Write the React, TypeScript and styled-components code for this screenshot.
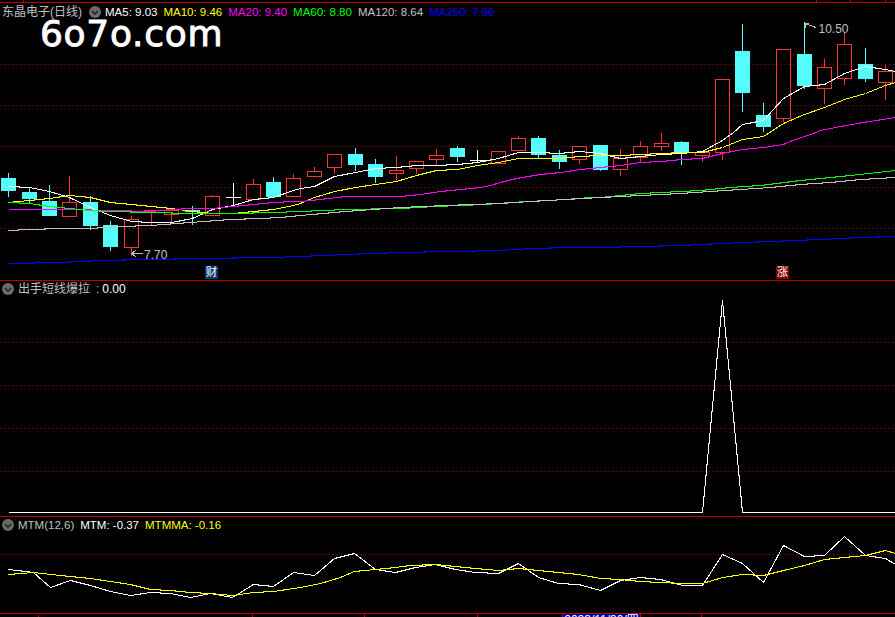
import React from "react";
import styled, { createGlobalStyle } from "styled-components";

const GlobalStyle = createGlobalStyle`
  html, body { margin: 0; padding: 0; background: #000; overflow: hidden; }
  #root { width: 895px; height: 617px; }
`;

const RED = "#c00000";
const UI_FONT = `"Liberation Sans", "Noto Sans CJK SC", sans-serif`;

const Page = styled.div`
  width: 895px;
  height: 617px;
  background: #000;
  display: flex;
  flex-direction: column;
  overflow: hidden;
  font-family: ${UI_FONT};
`;

const TopStrip = styled.div`
  position: relative;
  flex: none;
  height: 2px;
`;

const AxisStrip = styled.div`
  position: relative;
  flex: none;
  height: 4px;
  box-sizing: border-box;
  border-top: 1px solid ${RED};
  overflow: hidden;
`;

const Tick = styled.i<{ $x: number; $short?: boolean }>`
  position: absolute;
  left: ${(p) => p.$x}px;
  bottom: 0;
  top: ${(p) => (p.$short ? "1px" : "0")};
  width: 1px;
  background: ${RED};
`;

const DateBox = styled.div`
  position: absolute;
  left: 562px;
  top: 0;
  width: 79px;
  height: 3px;
  border-left: 1px solid ${RED};
  border-right: 1px solid ${RED};
  background: #0000a0;
  color: #fff;
  font-size: 12px;
  line-height: 12px;
  text-align: center;
  white-space: nowrap;
  overflow: hidden;
  box-sizing: border-box;
`;

const Panel = styled.section<{ $h: number }>`
  position: relative;
  flex: none;
  height: ${(p) => p.$h}px;
  box-sizing: border-box;
  border-top: 1px solid ${RED};
`;

const Chart = styled.svg`
  display: block;
  width: 895px;
  height: 100%;
`;

const Legend = styled.div<{ $left: number; $top: number }>`
  position: absolute;
  top: ${(p) => p.$top}px;
  left: ${(p) => p.$left}px;
  height: 16px;
  display: flex;
  align-items: center;
  gap: 6px;
  font-size: 11.5px;
  line-height: 16px;
  white-space: nowrap;
`;

const Title = styled.span<{ $size?: number }>`
  color: #c0c0c0;
  font-size: ${(p) => p.$size ?? 12}px;
`;

const Separator = styled.span`
  color: #c0c0c0;
  font-size: 12px;
  margin-right: -3px;
`;

const Metric = styled.span<{ $color: string; $size?: number }>`
  color: ${(p) => p.$color};
  font-size: ${(p) => p.$size ?? 11.5}px;
`;

const Toggle = styled.span`
  display: inline-flex;
  flex: none;
  width: 12px;
  height: 12px;
  margin-right: -2px;
`;

const Logo = styled.div`
  position: absolute;
  left: 40px;
  top: 17px;
  color: #fff;
  font-family: "DejaVu Sans", sans-serif;
  font-size: 36px;
  line-height: 28px;
  letter-spacing: 0.7px;
  -webkit-text-stroke: 0.9px #fff;
  white-space: nowrap;
`;

const PriceLabel = styled.span<{ $x: number; $y: number }>`
  position: absolute;
  left: ${(p) => p.$x}px;
  top: ${(p) => p.$y}px;
  color: #c0c0c0;
  font-size: 12px;
  line-height: 14px;
`;

const NewsBadge = styled.span<{ $x: number; $bg: string }>`
  position: absolute;
  left: ${(p) => p.$x}px;
  top: 263px;
  width: 13px;
  height: 13px;
  background: ${(p) => p.$bg};
  color: #fff;
  font-size: 11.5px;
  line-height: 13px;
  text-align: center;
`;

type Candle = [number, number, number, number, number, "r" | "c" | "w"];

const CANDLES: Candle[] = [
  [8, 178, 190, 173, 196, "c"], [29, 192, 198, 187, 203, "c"], [49, 201, 215, 185, 215, "c"],
  [69, 202, 216, 176, 216, "r"], [90, 202, 225, 196, 229, "c"], [110, 225, 246, 221, 250, "c"],
  [131, 219, 247, 216, 255, "r"], [151, 210, 212, 210, 224, "r"], [171, 210, 214, 210, 222, "r"],
  [192, 210, 211, 206, 224, "c"], [212, 196, 215, 195, 215, "r"], [233, 197, 197, 183, 206, "w"],
  [253, 184, 199, 179, 199, "r"], [273, 182, 196, 177, 197, "c"], [293, 178, 196, 174, 196, "r"],
  [314, 171, 176, 167, 176, "r"], [334, 154, 167, 154, 173, "r"], [355, 154, 164, 148, 170, "c"],
  [375, 164, 176, 159, 182, "c"], [396, 170, 173, 156, 181, "r"], [416, 161, 168, 161, 173, "r"],
  [436, 155, 159, 149, 164, "r"], [457, 148, 156, 146, 161, "c"], [477, 160, 160, 150, 162, "w"],
  [498, 151, 163, 151, 163, "r"], [518, 138, 150, 136, 150, "r"], [538, 138, 154, 136, 157, "c"],
  [559, 155, 161, 150, 168, "c"], [579, 146, 159, 146, 163, "r"], [600, 145, 169, 145, 170, "c"],
  [620, 158, 169, 149, 175, "r"], [640, 146, 157, 141, 161, "r"], [661, 143, 146, 133, 150, "r"],
  [681, 142, 151, 141, 164, "c"], [702, 152, 155, 152, 161, "r"], [722, 79, 152, 79, 159, "r"],
  [742, 51, 92, 24, 111, "c"], [763, 115, 126, 103, 131, "c"], [783, 49, 118, 49, 121, "r"],
  [804, 54, 85, 22, 88, "c"], [824, 67, 88, 59, 103, "r"], [844, 44, 78, 33, 84, "r"],
  [865, 64, 78, 48, 81, "c"], [885, 71, 82, 65, 99, "r"],
];

const MA5 = "8,186 29,187 49,191 69,197 90,207 110,215 131,221 151,222 171,222 192,218 212,209 233,205 253,199 273,197 293,190 300,188 314,186 334,176 355,172 375,168 396,167 416,165 436,165 457,164 477,162 498,158 518,152 538,152 559,153 579,151 600,153 620,158 640,156 661,154 681,153 702,151 722,140 733,132 742,124 763,120 783,98 804,86 824,84 844,73 865,66 885,69 895,71";
const MA10 = "8,202 29,200 49,198 69,195 90,197 110,202 131,204 151,206 171,208 192,211 212,213 233,213 253,211 273,209 293,205 300,203 314,197 334,191 355,187 375,184 396,181 416,175 436,170 457,169 477,165 498,162 518,158 538,158 559,158 579,156 600,155 620,155 640,154 661,153 681,152 702,152 722,147 742,139 763,136 783,123 804,114 824,107 844,99 865,93 885,85 895,82";
const MA20 = "8,209 70,209 110,210 150,211 171,209 192,208 212,208 233,206 253,204 273,202 293,201 300,201 320,199 345,196 400,196 420,194 440,191 460,189 480,187 490,185 500,182 516,178 540,174 560,172 580,169 600,167 620,165 640,162 661,161 681,159 702,158 722,153 742,149 763,147 783,144 792,140 813,133 820,130 840,126 863,122 895,117";
const MA60 = "8,202 29,203 49,206 69,208 90,210 110,211 150,212 192,213 233,213 273,212 300,211 345,209 400,208 435,206 460,205 485,204 510,202 565,199 590,197 600,197 640,193 680,191 700,190 730,187 760,185 800,180 850,175 895,170";
const MA120 = "8,230 29,229 60,228 90,228 120,226 150,225 190,222 230,219 260,218 280,217 300,215 345,211 400,207 445,205 500,203 530,201 565,199 600,197 640,195 680,193 710,191 740,189 770,187 800,184 830,182 860,179 895,177";
const MA250 = "8,263 60,262 100,260 150,259 200,258 270,257 300,256 345,254 400,252 450,251 500,250 530,248 570,247 600,247 640,246 680,245 720,243 770,241 820,239 860,237 895,236";

const SIGNAL = "8,512 702,512 722,300 742,512 895,512";

const MTM = "8,569 25,571 33,572 50,587 70,580 90,585 110,591 130,595 150,592 170,593 190,597 210,593 232,597 253,584 273,586 293,572 300,573 314,575 334,558 354,553 375,569 395,572 415,567 435,564 455,569 475,572 498,573 518,563 538,577 558,583 578,584 600,590 620,580 640,577 660,579 682,585 702,585 722,554 742,563 763,582 783,545 804,556 824,555 844,536 865,555 885,558 895,564";
const MTMMA = "8,574 33,572 60,575 90,578 110,581 130,584 150,589 170,590 190,592 210,593 232,595 253,592 273,591 293,588 300,587 320,583 340,577 354,571 375,569 395,567 410,565 435,564 455,566 475,568 498,570 518,568 538,570 558,572 578,574 600,578 620,579 640,581 660,582 682,583 702,583 722,577 742,574 763,575 783,570 804,565 824,559 844,557 865,555 885,550 895,553";

const Dotted = ({ ys }: { ys: number[] }) => (
  <g stroke="#8a0f0f" strokeWidth={1} strokeDasharray="1 3">
    {ys.map((y) => (
      <line key={y} x1={1} x2={895} y1={y + 0.5} y2={y + 0.5} />
    ))}
  </g>
);

const Line = ({ points, color }: { points: string; color: string }) => (
  <polyline points={points} fill="none" stroke={color} strokeWidth={1.05} transform="translate(0.5 0.5)" />
);

const CandleMark = ({ c }: { c: Candle }) => {
  const [x, top, bottom, wickTop, wickBottom, kind] = c;
  const color = kind === "r" ? "#ff3232" : kind === "c" ? "#54fcfc" : "#ffffff";
  const cx = x + 0.5;
  return (
    <g>
      {kind === "r" ? (
        <>
          <line x1={cx} x2={cx} y1={wickTop} y2={top} stroke={color} />
          <line x1={cx} x2={cx} y1={bottom + 1} y2={wickBottom + 1} stroke={color} />
          <rect x={x - 7 + 0.5} y={top + 0.5} width={14} height={bottom - top} fill="none" stroke={color} />
        </>
      ) : kind === "c" ? (
        <>
          <line x1={cx} x2={cx} y1={wickTop} y2={wickBottom + 1} stroke={color} />
          <rect x={x - 7} y={top} width={15} height={bottom - top + 1} fill={color} />
        </>
      ) : (
        <>
          <line x1={cx} x2={cx} y1={wickTop} y2={wickBottom + 1} stroke={color} />
          <line x1={x - 7} x2={x + 8} y1={top + 0.5} y2={top + 0.5} stroke={color} />
        </>
      )}
    </g>
  );
};

const ToggleIcon = () => (
  <Toggle>
    <svg width={12} height={12} viewBox="0 0 12 12">
      <circle cx={6} cy={6} r={6} fill="#6a6a6a" />
      <path d="M3 5 L6 8 L9 5" fill="none" stroke="#1c1c1c" strokeWidth={1.4} />
    </svg>
  </Toggle>
);

const TOP_TICKS = [23, 816, 850, 885];
const BOTTOM_TICKS = [252, 364, 477, 701];

export default function App() {
  return (
    <Page>
      <GlobalStyle />
      <TopStrip>
        {TOP_TICKS.map((x) => (
          <Tick key={x} $x={x} />
        ))}
      </TopStrip>

      <Panel $h={278}>
        <Chart viewBox="0 3 895 277" shapeRendering="crispEdges">
          <Dotted ys={[64, 105, 146, 187, 228]} />
          {CANDLES.map((c) => (
            <CandleMark key={c[0]} c={c} />
          ))}
          <Line points={MA5} color="#ffffff" />
          <Line points={MA10} color="#ffff00" />
          <Line points={MA20} color="#ff00ff" />
          <Line points={MA60} color="#00ff00" />
          <Line points={MA120} color="#c0c0c0" />
          <Line points={MA250} color="#0000ff" />
          <g fill="none" stroke="#c0c0c0">
            <path d="M131 253.5 H143 M131 253.5 L136 250.5 M131 253.5 L136 256.5" />
            <path d="M805.5 28 V23.5 H809 M806 24 L816 27.5" />
          </g>
        </Chart>
        <Legend $left={2} $top={1}>
          <Title>东晶电子(日线)</Title>
        </Legend>
        <Legend $left={89} $top={1}>
          <ToggleIcon />
          <Metric $color="#ffffff">MA5: 9.03</Metric>
          <Metric $color="#ffff00">MA10: 9.46</Metric>
          <Metric $color="#ff00ff">MA20: 9.40</Metric>
          <Metric $color="#00ff00">MA60: 8.80</Metric>
          <Metric $color="#c0c0c0">MA120: 8.64</Metric>
          <Metric $color="#0000ff">MA250: 7.96</Metric>
        </Legend>
        <Logo>6o7o.com</Logo>
        <PriceLabel $x={144} $y={245}>7.70</PriceLabel>
        <PriceLabel $x={818.5} $y={19}>10.50</PriceLabel>
        <NewsBadge $x={205} $bg="#0a3a6e">财</NewsBadge>
        <NewsBadge $x={776} $bg="#800000">涨</NewsBadge>
      </Panel>

      <Panel $h={236}>
        <Chart viewBox="0 281 895 235" shapeRendering="crispEdges">
          <Dotted ys={[342, 385, 428, 471]} />
          <Line points={SIGNAL} color="#ffffff" />
        </Chart>
        <Legend $left={2} $top={0}>
          <ToggleIcon />
          <Title>出手短线爆拉</Title>
          <Separator>:</Separator>
          <Metric $color="#ffffff" $size={12}>0.00</Metric>
        </Legend>
      </Panel>

      <Panel $h={97}>
        <Chart viewBox="0 517 895 96" shapeRendering="crispEdges">
          <Dotted ys={[554]} />
          <Line points={MTM} color="#ffffff" />
          <Line points={MTMMA} color="#ffff00" />
        </Chart>
        <Legend $left={2} $top={0}>
          <ToggleIcon />
          <Title $size={11.5}>MTM(12,6)</Title>
          <Metric $color="#ffffff">MTM: -0.37</Metric>
          <Metric $color="#ffff00">MTMMA: -0.16</Metric>
        </Legend>
      </Panel>

      <AxisStrip>
        <Tick $x={38} $short />
        {BOTTOM_TICKS.map((x) => (
          <Tick key={x} $x={x} />
        ))}
        <DateBox>2023/11/30/四</DateBox>
      </AxisStrip>
    </Page>
  );
}
